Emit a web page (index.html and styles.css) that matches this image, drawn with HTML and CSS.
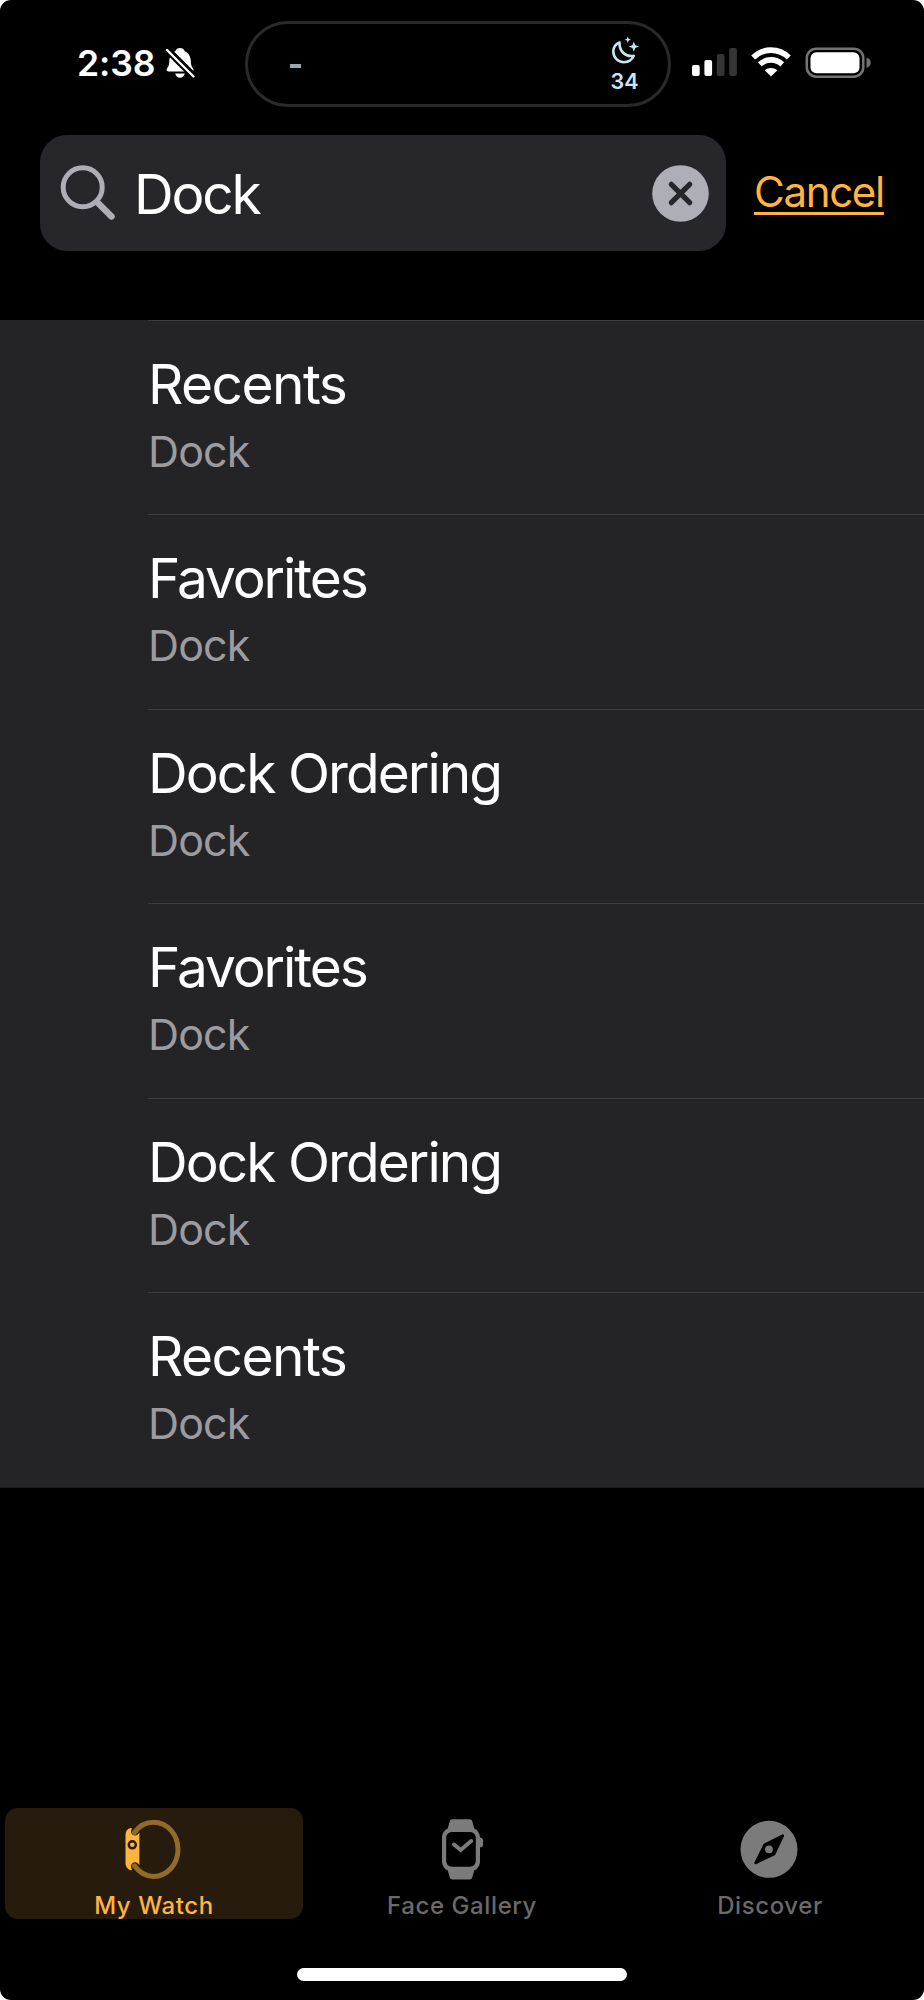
FILE: index.html
```html
<!DOCTYPE html>
<html lang="en">
<head>
<meta charset="utf-8">
<title>My Watch</title>
<link rel="stylesheet" href="styles.css">
</head>
<body>
<div class="screen">
  <header class="status">
    <div class="clock">
      <span class="time">2:38</span>
      <svg class="bell" width="30" height="32" viewBox="0 0 30 32">
        <path fill="#fff" d="M15 1c2.300 0 4 1.200 4.700 3.200C24 6 25.600 9.800 25.800 14c.100 4 .700 5.500 2.300 7.600.900 1.200.4 2.900-1.300 2.900H3.300c-1.700 0-2.200-1.700-1.300-2.900C3.600 19.500 4.200 18 4.300 14 4.500 9.800 6.100 6 10.300 4.200 11 2.200 12.700 1 15 1zM10.200 26.500h9.600c-.5 2.600-2.400 4.200-4.800 4.200s-4.300-1.600-4.800-4.200z"/>
        <path stroke="#000" stroke-width="7" d="M1 1.500l29 29"/>
        <path stroke="#fff" stroke-width="2.400" stroke-linecap="round" d="M2 3l26.500 26.500"/>
      </svg>
    </div>
    <div class="island">
      <span class="dash"></span>
      <div class="focus">
        <svg width="28" height="30" viewBox="0 0 28 30">
          <path fill="none" stroke="#c5e8f3" stroke-width="2.600" stroke-linejoin="round" d="M8.500 6.500C4.500 8.200 2.300 11.300 2.300 15.600c0 6 4.700 10.600 10.600 10.600 4.500 0 8-2.300 10-6.400-8.600 1.500-14.700-4.500-14.400-13.300z"/>
          <path fill="#c5e8f3" d="M16.800.5l.9 2.300 2.300.9-2.300.9-.9 2.400-.9-2.400-2.300-.9 2.300-.9zM22.800 5.500l1.400 3.700 3.800 1.400-3.800 1.400-1.400 3.700-1.400-3.700-3.700-1.400 3.700-1.400z"/>
        </svg>
        <span class="focus-num">34</span>
      </div>
    </div>
    <div class="radios">
      <svg width="45" height="30" viewBox="0 0 45 30">
        <rect x="0" y="18" width="7.700" height="11" rx="2" fill="#fff"/>
        <rect x="12.400" y="13" width="7.700" height="16" rx="2" fill="#fff"/>
        <rect x="24.800" y="7" width="7.700" height="22" rx="2" fill="#353535"/>
        <rect x="37.200" y="1" width="7.700" height="28" rx="2" fill="#353535"/>
      </svg>
      <svg width="40" height="30" viewBox="0 0 40 30">
        <g fill="none" stroke="#fff" stroke-width="5.600">
          <path d="M2.200 10.500c10-9.800 25.600-9.800 35.600 0"/>
          <path d="M8.800 17.400c6.400-6 16-6 22.400 0"/>
        </g>
        <path fill="#fff" d="M20 29.500l-6.300-6.300c3.600-3 9-3 12.600 0z"/>
      </svg>
      <svg width="66" height="32" viewBox="0 0 66 32">
        <rect x="1.800" y="1.700" width="56.500" height="28" rx="9.500" fill="none" stroke="#747474" stroke-width="2.500"/>
        <rect x="5.500" y="5.200" width="49" height="21" rx="6" fill="#fff"/>
        <path fill="#747474" d="M61.500 10.500c2.700 1 4.200 2.900 4.200 5.200s-1.500 4.200-4.200 5.200z"/>
      </svg>
    </div>
  </header>

  <div class="search-row">
    <div class="search">
      <svg class="lens" width="56" height="58" viewBox="0 0 56 58">
        <circle cx="22.700" cy="23.300" r="19.500" fill="none" stroke="#aeaeb6" stroke-width="5"/>
        <path d="M37 38l14.500 14.500" stroke="#aeaeb6" stroke-width="6.500" stroke-linecap="round"/>
      </svg>
      <span class="query">Dock</span>
      <svg class="clear" width="57" height="57" viewBox="0 0 57 57">
        <circle cx="28.500" cy="28.500" r="28.300" fill="#aeaeb6"/>
        <path d="M19.300 19.300l18.400 18.400M37.700 19.300L19.300 37.700" stroke="#27272b" stroke-width="5.200" stroke-linecap="round"/>
      </svg>
    </div>
    <a class="cancel">Cancel</a>
  </div>

  <ul class="results">
    <li class="result"><span class="title recents">Recents</span><span class="sub">Dock</span></li>
    <li class="result"><span class="title favorites">Favorites</span><span class="sub">Dock</span></li>
    <li class="result"><span class="title ordering">Dock Ordering</span><span class="sub">Dock</span></li>
    <li class="result"><span class="title favorites">Favorites</span><span class="sub">Dock</span></li>
    <li class="result"><span class="title ordering">Dock Ordering</span><span class="sub">Dock</span></li>
    <li class="result"><span class="title recents">Recents</span><span class="sub">Dock</span></li>
  </ul>

  <nav class="tabs">
    <div class="tab active">
      <svg width="66" height="62" viewBox="0 0 66 62">
        <path d="M13.500 14.500C18.500 7.500 25 4.200 32.500 4.200c13.500 0 24.500 12 24.500 27.100S46 58.400 32.500 58.400c-7.500 0-14-3.600-19-10.600" fill="none" stroke="#946a2b" stroke-width="5" stroke-linecap="round"/>
        <path fill="#ffb341" d="M9.500 10c-3.500 1-5 3.500-5 7v28c0 3.500 1.700 6 5.500 7.500l1-.7c-2-3.800-.5-7.600 3-7.600 2 0 3 1.200 4.400 3V14.500c-1.400 2-2.400 3-4.400 3-3.500 0-5-3.400-3-7.200z"/>
        <circle cx="11.300" cy="26.800" r="3.600" fill="#261b0c" stroke="#261b0c" stroke-width="2.300"/>
        <circle cx="11.300" cy="26.800" r="2.300" fill="#ffb341"/>
      </svg>
      <span class="label">My Watch</span>
    </div>
    <div class="tab">
      <svg width="62" height="62" viewBox="0 0 62 62">
        <path fill="#7b7b7b" fill-rule="evenodd" d="M21.500 1.300h17c1.500 0 2.400.8 2.800 2.100l2 7.100c3.400 1.500 5.600 4.700 5.700 8.800l.5.500c1.600.2 2.600 1.300 2.600 2.900v3.700c0 1.600-1 2.700-2.600 2.900l-.5.500v13.100c0 4.500-2.200 7.800-5.700 9.400l-2 7c-.4 1.300-1.300 2.100-2.800 2.100h-17c-1.500 0-2.400-.8-2.800-2.100l-2-7c-3.500-1.600-5.700-4.900-5.700-9.400V19.900c0-4.500 2.200-7.900 5.700-9.400l2-7.100c.4-1.300 1.300-2.100 2.800-2.100zM21.500 14c-4 0-6.300 2.400-6.300 6.200v22.400c0 3.800 2.300 6.200 6.300 6.200h17c4 0 6.300-2.400 6.300-6.200V20.200c0-3.800-2.300-6.200-6.300-6.200z"/>
        <path d="M23 26.500l6.700 5.500 10.500-9" fill="none" stroke="#7b7b7b" stroke-width="4" stroke-linecap="round"/>
      </svg>
      <span class="label">Face Gallery</span>
    </div>
    <div class="tab">
      <svg width="62" height="62" viewBox="0 0 62 62">
        <circle cx="30" cy="31.300" r="28.500" fill="#7b7b7b"/>
        <path d="M43.800 17.600L25.700 26.600 16.500 45l18.600-8.800z" fill="#000" stroke="#000" stroke-width="2.500" stroke-linejoin="round"/>
        <circle cx="30" cy="31.300" r="3.900" fill="#7b7b7b"/>
      </svg>
      <span class="label">Discover</span>
    </div>
  </nav>
  <div class="home"></div>
</div>
</body>
</html>
```
FILE: styles.css
```css
* { box-sizing: border-box; }
body { margin: 0; background: #fff; font-family: Inter, "Liberation Sans", sans-serif; color: #fff; }
svg { display: block; flex: none; }
.screen { width: 924px; height: 2000px; background: #000; border-radius: 11px; overflow: hidden; display: flex; flex-direction: column; }

.status { height: 135px; flex: none; display: flex; align-items: flex-start; }
.clock { width: 245px; padding: 42px 0 0 77px; display: flex; gap: 10px; align-items: flex-start; }
.time { width: 78px; font-size: 35.5px; font-weight: 600; line-height: 43px; letter-spacing: -0.1px; white-space: nowrap; }
.bell { margin-top: 5px; }
.island { width: 426px; height: 86px; margin-top: 21px; border: 3px solid #2a2a2a; border-radius: 43px; display: flex; justify-content: space-between; padding: 0 29px 0 42px; }
.dash { width: 11px; height: 4px; margin-top: 40px; background: #8fabb6; }
.focus { display: flex; flex-direction: column; align-items: center; padding-top: 12px; }
.focus-num { font-size: 21.5px; font-weight: 600; line-height: 24px; margin-top: 3px; color: #c9e6f2; letter-spacing: 0.3px; }
.radios { display: flex; gap: 14px; padding: 47px 0 0 21px; }

.search-row { height: 185px; flex: none; display: flex; align-items: flex-start; padding-left: 40px; gap: 28px; }
.search { width: 686px; height: 116px; border-radius: 27px; background: #27272b; display: flex; align-items: flex-start; padding: 29px 17px 0 20px; }
.query { flex: 1; font-size: 55px; line-height: 66px; margin: -3px 0 0 18px; letter-spacing: -2.2px; }
.clear { margin-top: 1px; }
.cancel { color: #ffb341; font-size: 42px; line-height: 52px; margin-top: 31px; letter-spacing: -1.3px; text-decoration: underline; text-decoration-thickness: 3px; text-underline-offset: 5px; text-decoration-skip-ink: none; }

.results { list-style: none; margin: 0; padding: 0 0 0.6px 148px; background: #242426; height: 1168px; flex: none; display: flex; flex-direction: column; border-bottom: 1px solid #1b1b1c; }
.result { flex: 1; border-top: 1px solid #3d3d3f; padding-top: 30px; display: flex; flex-direction: column; }
.title { font-size: 55px; line-height: 66px; letter-spacing: -1.55px; }
.favorites { letter-spacing: -2.1px; }
.ordering { letter-spacing: -1.95px; }
.sub { font-size: 43px; line-height: 54px; margin-top: 7px; color: #9b9ba0; letter-spacing: -0.9px; }

.tabs { margin-top: 320px; height: 111px; flex: none; display: grid; grid-template-columns: 298px 298px 298px; gap: 10px; padding-left: 5px; }
.tab { border-radius: 13px; display: flex; flex-direction: column; align-items: center; padding-top: 10px; color: #6a6a6a; }
.tab.active { background: #261b0c; color: #ffb341; }
.label { font-size: 24px; font-weight: 500; line-height: 26px; margin-top: 13px; letter-spacing: 0.6px; white-space: nowrap; }
.home { width: 330px; height: 13px; margin: 49px auto 0; border-radius: 7px; background: #fff; flex: none; }
```
